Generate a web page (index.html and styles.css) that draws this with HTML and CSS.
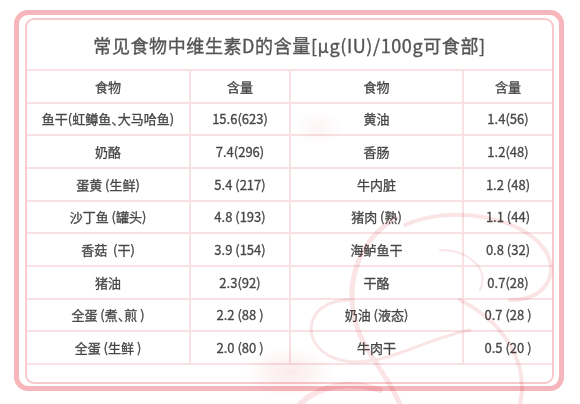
FILE: index.html
```html
<!DOCTYPE html>
<html lang="zh">
<head>
<meta charset="utf-8">
<link rel="stylesheet" href="styles.css">
</head>
<body>
<div class="frame">
  <div class="card">
    <div class="title">常见食物中维生素D的含量[μg(IU)/100g可食部]</div>
    <div class="grid">
      <div class="cell">食物</div><div class="cell">含量</div><div class="cell">食物</div><div class="cell">含量</div>
      <div class="cell">鱼干(虹鳟鱼、大马哈鱼)</div><div class="cell">15.6(623)</div><div class="cell">黄油</div><div class="cell">1.4(56)</div>
      <div class="cell">奶酪</div><div class="cell">7.4(296)</div><div class="cell">香肠</div><div class="cell">1.2(48)</div>
      <div class="cell">蛋黄 (生鲜)</div><div class="cell">5.4 (217)</div><div class="cell">牛内脏</div><div class="cell">1.2 (48)</div>
      <div class="cell">沙丁鱼 (罐头)</div><div class="cell">4.8 (193)</div><div class="cell">猪肉 (熟)</div><div class="cell">1.1 (44)</div>
      <div class="cell">香菇&nbsp; (干)</div><div class="cell">3.9 (154)</div><div class="cell">海鲈鱼干</div><div class="cell">0.8 (32)</div>
      <div class="cell">猪油</div><div class="cell">2.3(92)</div><div class="cell">干酪</div><div class="cell">0.7(28)</div>
      <div class="cell">全蛋 (煮、煎 )</div><div class="cell">2.2 (88 )</div><div class="cell">奶油 (液态)</div><div class="cell">0.7 (28 )</div>
      <div class="cell">全蛋 (生鲜 )</div><div class="cell">2.0 (80 )</div><div class="cell">牛肉干</div><div class="cell">0.5 (20 )</div>
    </div>
  </div>
</div>
<svg class="watermark" width="580" height="404" viewBox="0 0 580 404">
  <defs>
    <radialGradient id="blob" cx="0.5" cy="0.5" r="0.5">
      <stop offset="0" stop-color="#f6c9cd" stop-opacity="0.4"/>
      <stop offset="1" stop-color="#f6c9cd" stop-opacity="0"/>
    </radialGradient>
  </defs>
  <ellipse cx="290" cy="372" rx="45" ry="26" fill="url(#blob)"/>
  <ellipse cx="318" cy="128" rx="24" ry="18" fill="url(#blob)" opacity="0.5"/>
  <g fill="none" stroke="#f3c4c8" stroke-linecap="round" opacity="0.45">
    <path d="M395 218 C 360 240, 345 280, 355 320 C 362 350, 385 370, 400 404" stroke-width="5"/>
    <path d="M405 225 C 450 205, 520 215, 545 250 C 560 275, 545 300, 510 300" stroke-width="4"/>
    <path d="M350 300 C 300 300, 300 350, 340 360 C 380 370, 420 340, 470 330" stroke-width="3"/>
    <path d="M460 300 C 500 320, 530 360, 520 404" stroke-width="4"/>
    <path d="M300 404 C 320 385, 350 380, 380 390" stroke-width="6"/>
    <path d="M440 250 C 470 250, 490 270, 480 290" stroke-width="2"/>
  </g>
</svg>
</body>
</html>
```
FILE: styles.css
```css
html, body {
  margin: 0;
  padding: 0;
  background: #ffffff;
}
body {
  width: 580px;
  height: 404px;
  position: relative;
  overflow: hidden;
  font-family: "Noto Sans CJK SC", "Noto Sans", sans-serif;
}
.frame {
  box-sizing: border-box;
  margin: 10px 0 0 14px;
  width: 550px;
  height: 381px;
  border: 5px solid #f6b6bb;
  border-radius: 14px;
  padding: 3px 5px 2px 6px;
}
.card {
  box-sizing: border-box;
  height: 100%;
  border: 2px solid #f8c9cc;
  border-radius: 9px;
  overflow: hidden;
}
.title {
  height: 49px;
  display: flex;
  align-items: center;
  justify-content: center;
  font-size: 18px;
  letter-spacing: 0.6px;
  color: #555555;
  -webkit-text-stroke: 0.35px #555555;
}
.grid {
  display: grid;
  grid-template-columns: 162px 98px 171px 88px;
  grid-auto-rows: 30.67px;
  gap: 2px;
  padding: 2px 0;
  background: #f7e1e2;
}
.cell {
  background: #ffffff;
  display: flex;
  align-items: center;
  justify-content: center;
  font-size: 13px;
  color: #474747;
  -webkit-text-stroke: 0.3px #474747;
  font-feature-settings: "halt";
  white-space: nowrap;
}
.watermark {
  position: absolute;
  left: 0;
  top: 0;
  pointer-events: none;
  mix-blend-mode: multiply;
}
```
